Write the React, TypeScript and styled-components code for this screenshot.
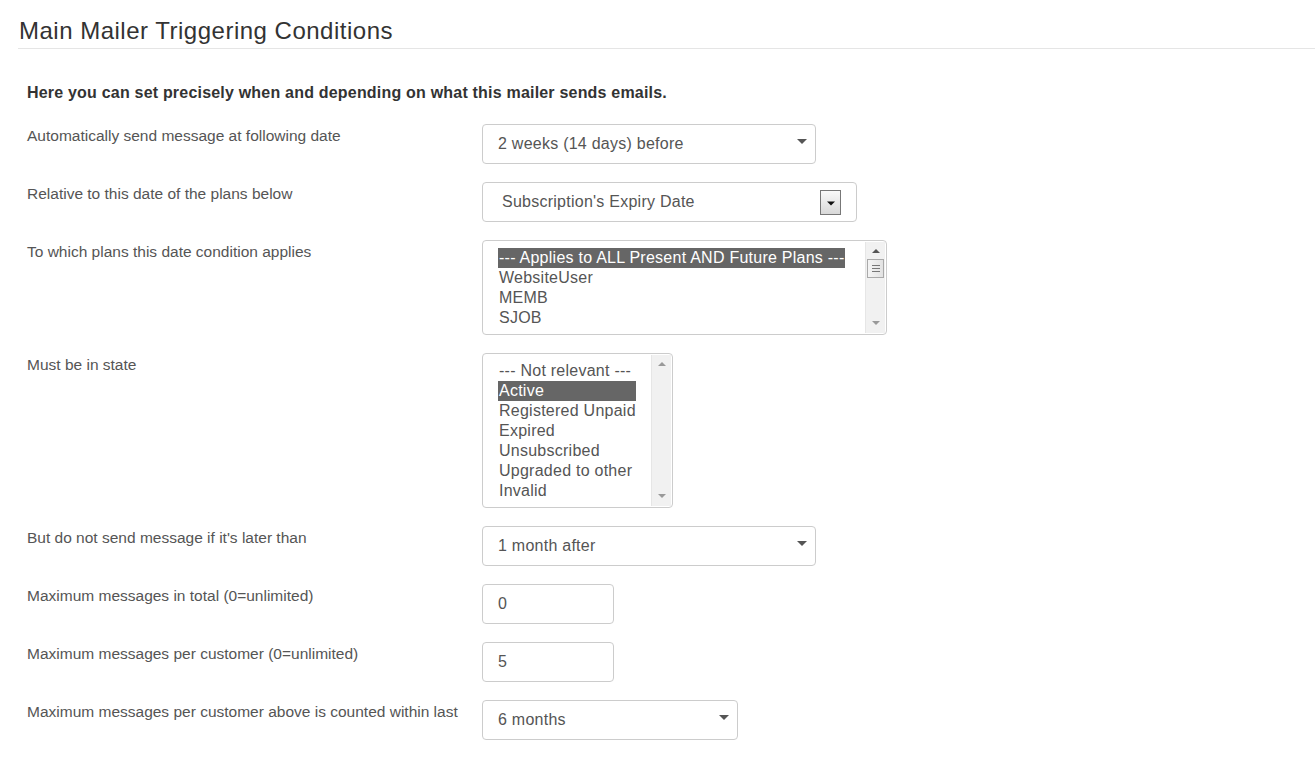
import styled, { createGlobalStyle, css } from "styled-components";

const GlobalStyle = createGlobalStyle`
  body {
    margin: 0;
    background: #fff;
    font-family: "Liberation Sans", Arial, sans-serif;
    color: #555;
  }
`;

const Page = styled.div`
  padding: 19px 0 40px 18px;
`;

const Title = styled.h2`
  margin: 0;
  padding: 0 0 5px 1px;
  font-size: 24px;
  line-height: 24px;
  letter-spacing: 0.5px;
  font-weight: 400;
  color: #333;
  border-bottom: 1px solid #e5e5e5;
`;

const Body = styled.div`
  padding: 34px 0 0 9px;
`;

const Intro = styled.p`
  margin: 0 0 21px;
  font-size: 16px;
  line-height: 20px;
  letter-spacing: 0.2px;
  font-weight: 700;
  color: #333;
`;

const Rows = styled.div`
  display: grid;
  grid-template-columns: 455px auto;
  row-gap: 18px;
  align-items: start;
  justify-items: start;
`;

const Label = styled.div`
  padding-top: 2px;
  font-size: 15.5px;
  line-height: 20px;
  color: #555;
`;

const boxBase = css`
  box-sizing: border-box;
  border: 1px solid #ccc;
  border-radius: 4px;
  background: #fff;
  font-size: 16px;
  letter-spacing: 0.25px;
  color: #555;
`;

const SelectBox = styled.div<{ $width: number; $pad?: number }>`
  ${boxBase};
  width: ${(p) => p.$width}px;
  height: 40px;
  display: flex;
  align-items: center;
  justify-content: space-between;
  padding: 0 8px 0 ${(p) => p.$pad ?? 15}px;
`;

const Caret = styled.svg`
  width: 10px;
  height: 5px;
  margin-top: -5px;
  fill: #555;
`;

const LegacyButton = styled.div`
  box-sizing: border-box;
  width: 21px;
  height: 25px;
  margin-right: 7px;
  border: 1px solid #777;
  background: linear-gradient(#fafafa, #d8d8d8);
  display: grid;
  place-items: center;

  svg {
    width: 8px;
    height: 5px;
    fill: #111;
    margin-top: 2px;
  }
`;

const ListBox = styled.div<{ $width: number; $height: number }>`
  ${boxBase};
  width: ${(p) => p.$width}px;
  height: ${(p) => p.$height}px;
  display: flex;
  justify-content: space-between;
  overflow: hidden;
`;

const Options = styled.div`
  display: flex;
  flex-direction: column;
  align-self: flex-start;
  width: max-content;
  padding: 7px 0 0 15px;
`;

const Option = styled.div<{ $selected?: boolean }>`
  height: 20px;
  line-height: 20px;
  white-space: nowrap;
  padding-left: 1px;
  background: ${(p) => (p.$selected ? "#666" : "transparent")};
  color: ${(p) => (p.$selected ? "#fff" : "#555")};
`;

const Scrollbar = styled.div`
  width: 20px;
  margin: 1px 1px 1px 0;
  background: #f1f1f1;
  border-left: 1px solid #e6e6e6;
  display: flex;
  flex-direction: column;
  align-items: center;
  padding: 7px 0 8px;
  box-sizing: border-box;
`;

const ScrollArrow = styled.svg<{ $dark?: boolean }>`
  width: 8px;
  height: 4px;
  fill: ${(p) => (p.$dark ? "#555" : "#999")};
  flex: none;
`;

const Track = styled.div`
  flex: 1;
  width: 100%;
  display: flex;
  justify-content: center;
  padding-top: 6px;
`;

const Thumb = styled.div`
  box-sizing: border-box;
  width: 17px;
  height: 19px;
  border: 1px solid #a9a9a9;
  background: linear-gradient(90deg, #f4f4f4, #e2e2e2);
  display: flex;
  flex-direction: column;
  justify-content: center;
  align-items: center;
  gap: 2px;

  span {
    display: block;
    width: 8px;
    height: 1px;
    background: #777;
  }
`;

const TextInput = styled.input`
  ${boxBase};
  width: 132px;
  height: 40px;
  padding: 0 15px;
  font-family: inherit;
  outline: none;
`;

const DownTriangle = () => (
  <svg viewBox="0 0 10 5">
    <path d="M0 0h10L5 5z" />
  </svg>
);

const Select = ({ value, width }: { value: string; width: number }) => (
  <SelectBox $width={width}>
    <span>{value}</span>
    <Caret viewBox="0 0 10 5">
      <path d="M0 0h10L5 5z" />
    </Caret>
  </SelectBox>
);

const FakeScrollbar = ({ thumb }: { thumb?: boolean }) => (
  <Scrollbar>
    <ScrollArrow viewBox="0 0 8 4" $dark={thumb}>
      <path d="M0 4L4 0l4 4z" />
    </ScrollArrow>
    <Track>
      {thumb && (
        <Thumb>
          <span />
          <span />
          <span />
        </Thumb>
      )}
    </Track>
    <ScrollArrow viewBox="0 0 8 4">
      <path d="M0 0h8L4 4z" />
    </ScrollArrow>
  </Scrollbar>
);

const plans = [
  "--- Applies to ALL Present AND Future Plans ---",
  "WebsiteUser",
  "MEMB",
  "SJOB",
];

const states = [
  "--- Not relevant ---",
  "Active",
  "Registered Unpaid",
  "Expired",
  "Unsubscribed",
  "Upgraded to other",
  "Invalid",
];

export default function App() {
  return (
    <Page>
      <GlobalStyle />
      <Title>Main Mailer Triggering Conditions</Title>
      <Body>
        <Intro>Here you can set precisely when and depending on what this mailer sends emails.</Intro>
        <Rows>
          <Label>Automatically send message at following date</Label>
          <Select value="2 weeks (14 days) before" width={334} />

          <Label>Relative to this date of the plans below</Label>
          <SelectBox $width={375} $pad={19}>
            <span>Subscription's Expiry Date</span>
            <LegacyButton>
              <DownTriangle />
            </LegacyButton>
          </SelectBox>

          <Label>To which plans this date condition applies</Label>
          <ListBox $width={405} $height={95}>
            <Options>
              {plans.map((p, i) => (
                <Option key={p} $selected={i === 0}>
                  {p}
                </Option>
              ))}
            </Options>
            <FakeScrollbar thumb />
          </ListBox>

          <Label>Must be in state</Label>
          <ListBox $width={191} $height={155}>
            <Options>
              {states.map((s) => (
                <Option key={s} $selected={s === "Active"}>
                  {s}
                </Option>
              ))}
            </Options>
            <FakeScrollbar />
          </ListBox>

          <Label>But do not send message if it's later than</Label>
          <Select value="1 month after" width={334} />

          <Label>Maximum messages in total (0=unlimited)</Label>
          <TextInput defaultValue="0" />

          <Label>Maximum messages per customer (0=unlimited)</Label>
          <TextInput defaultValue="5" />

          <Label>Maximum messages per customer above is counted within last</Label>
          <Select value="6 months" width={256} />
        </Rows>
      </Body>
    </Page>
  );
}
